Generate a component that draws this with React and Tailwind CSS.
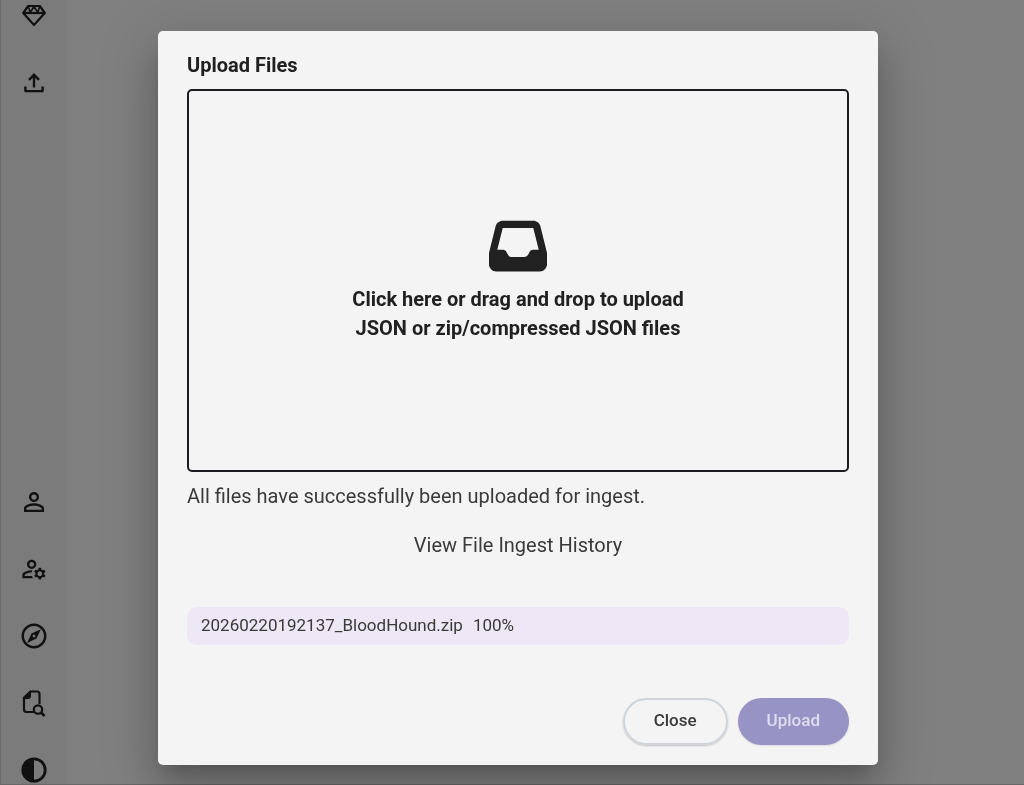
import { FaInbox } from 'react-icons/fa6';
import { MdOutlineExplore, MdOutlineManageAccounts, MdPersonOutline } from 'react-icons/md';

const GemIcon = () => (
  <svg viewBox="0 0 24 24" className="size-6" fill="none" stroke="currentColor" strokeWidth="2.2" strokeLinejoin="round">
    <path d="M6.200 3h11.600l5 7L12 22 1.200 10z" />
    <path d="M1.200 10h21.600" />
    <path d="M6.200 3l2 6.500L12 3.500l3.800 6 2-6.500" strokeWidth="1.600" />
  </svg>
);

const UploadIcon = () => (
  <svg viewBox="0 0 24 24" className="size-6" fill="none" stroke="currentColor" strokeWidth="2.4">
    <path d="M12 17.5V4.5M7 9.8L12 4.8l5 5" />
    <path d="M3.4 16.5v4.6h17.2v-4.6" strokeLinejoin="round" />
  </svg>
);

const FileSearchIcon = () => (
  <svg viewBox="0 0 24 28" className="h-7 w-6" fill="none" stroke="currentColor" strokeWidth="2.2">
    <path d="M12 23H4.500a2.500 2.500 0 0 1-2.500-2.500V8.500L8.500 2.500H15a2.500 2.500 0 0 1 2.500 2.500v10" strokeLinejoin="round" />
    <path d="M2 9.500V8l6.500-6v5.500a2 2 0 0 1-2 2z" fill="currentColor" strokeWidth="1" />
    <circle cx="16" cy="20.500" r="4.200" />
    <path d="M19 23.500l3.500 3.500" strokeWidth="2.600" />
  </svg>
);

const ContrastIcon = () => (
  <svg viewBox="0 0 26 26" className="size-[26px]">
    <circle cx="13" cy="13" r="11.2" fill="none" stroke="currentColor" strokeWidth="2.8" />
    <path d="M13 1a12 12 0 0 0 0 24z" fill="currentColor" />
  </svg>
);

const topItems = [
  { label: 'Privilege Zones', icon: <GemIcon /> },
  { label: 'Quick Upload', icon: <UploadIcon /> },
];

const bottomItems = [
  { label: 'Profile', icon: <MdPersonOutline className="size-[30px]" /> },
  { label: 'Administration', icon: <MdOutlineManageAccounts className="size-7" /> },
  { label: 'API Explorer', icon: <MdOutlineExplore className="size-[30px]" /> },
  { label: 'Docs', icon: <FileSearchIcon /> },
  { label: 'Dark Mode', icon: <ContrastIcon /> },
];

const NavGroup = ({ items }) => (
  <div className="flex flex-col items-center gap-[43px]">
    {items.map((item) => (
      <button key={item.label} type="button" aria-label={item.label} className="flex size-6 items-center justify-center">
        <span className="shrink-0">{item.icon}</span>
      </button>
    ))}
  </div>
);

const UploadDialog = () => (
  <div
    role="dialog"
    aria-labelledby="upload-title"
    className="w-full max-w-[720px] rounded-[5px] bg-[#f4f4f4] px-[29px] py-5 shadow-[0_13px_18px_-8px_rgba(0,0,0,0.2),0_29px_46px_4px_rgba(0,0,0,0.14),0_11px_55px_10px_rgba(0,0,0,0.12)]"
  >
    <h2 id="upload-title" className="text-xl leading-7 font-bold">Upload Files</h2>
    <label className="mt-2.5 flex min-h-[383px] cursor-pointer flex-col items-center justify-center rounded-[5px] border-2 border-[#1d1b20] text-center">
      <FaInbox className="size-[58px]" />
      <span className="mt-2.5 max-w-[360px] text-xl leading-[29px] font-bold">
        Click here or drag and drop to upload JSON or zip/compressed JSON files
      </span>
      <input type="file" multiple className="sr-only" />
    </label>
    <p className="mt-2.5 text-xl leading-[29px] text-[#3a3a3a]">All files have successfully been uploaded for ingest.</p>
    <div className="mt-5 text-center">
      <a href="#history" className="text-xl leading-7 text-[#3a3a3a]">View File Ingest History</a>
    </div>
    <div className="mt-12 flex h-[38px] items-center gap-2.5 rounded-[10px] bg-[#ede7f6] px-3.5 text-[17px] text-[#3a3a3a]">
      <span>20260220192137_BloodHound.zip</span>
      <span>100%</span>
    </div>
    <div className="mt-[53px] flex justify-end gap-2.5">
      <button type="button" className="h-[47px] rounded-full border-2 border-[#ced4da] px-[29px] text-[17px] font-medium text-[#3a3a3a] shadow-[0_1px_2px_rgba(0,0,0,0.2)]">
        Close
      </button>
      <button type="button" disabled className="h-[47px] rounded-full bg-[#9793c4] px-[29px] text-[17px] font-medium text-[#dfddf0] shadow-[0_1px_2px_rgba(0,0,0,0.1)]">
        Upload
      </button>
    </div>
  </div>
);

export default function App() {
  return (
    <div className="flex h-screen overflow-hidden border-b border-[#686868] bg-[#808080] font-[Roboto,sans-serif] text-[#212121]">
      <nav className="flex w-[67px] shrink-0 flex-col justify-between border-l border-[#6c6c6c] bg-[#7b7b7b] pt-[3px] pr-px pb-0.5 text-[#111]">
        <NavGroup items={topItems} />
        <NavGroup items={bottomItems} />
      </nav>
      <div className="fixed inset-0 flex items-center justify-center pt-2.5 pl-3">
        <UploadDialog />
      </div>
    </div>
  );
}
